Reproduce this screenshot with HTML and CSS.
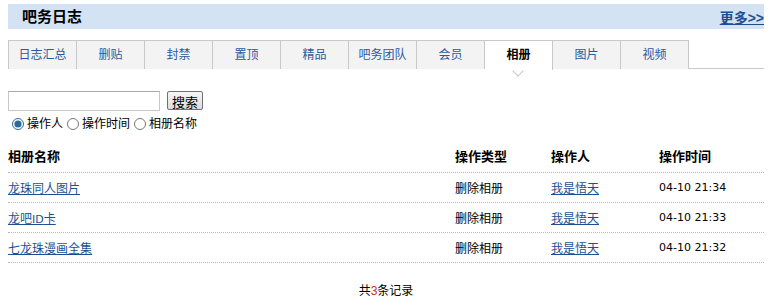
FILE: index.html
```html
<!DOCTYPE html>
<html lang="zh-CN">
<head>
  <meta charset="UTF-8" />
  <title>吧务日志</title>
  <link rel="stylesheet" href="styles.css">
</head>
<body>
  <div class="panel">
    <div class="panel-head">
      <h2>吧务日志</h2>
      <a class="more" href="#">更多&gt;&gt;</a>
    </div>

    <ul class="tabs">
      <li><a href="#">日志汇总</a></li>
      <li><a href="#">删贴</a></li>
      <li><a href="#">封禁</a></li>
      <li><a href="#">置顶</a></li>
      <li><a href="#">精品</a></li>
      <li><a href="#">吧务团队</a></li>
      <li><a href="#">会员</a></li>
      <li class="active"><a href="#">相册</a></li>
      <li><a href="#">图片</a></li>
      <li><a href="#">视频</a></li>
    </ul>

    <form class="search">
      <div class="search-row">
        <input type="text" class="search-input">
        <button type="button" class="search-btn">搜索</button>
      </div>
      <div class="radio-row">
        <label><input type="radio" name="by" checked>操作人</label>
        <label><input type="radio" name="by">操作时间</label>
        <label><input type="radio" name="by">相册名称</label>
      </div>
    </form>

    <div class="log-table">
      <div class="log-row log-head">
        <span>相册名称</span>
        <span>操作类型</span>
        <span>操作人</span>
        <span>操作时间</span>
      </div>
      <div class="log-row">
        <span><a href="#">龙珠同人图片</a></span>
        <span>删除相册</span>
        <span><a href="#">我是悟天</a></span>
        <span class="time">04-10 21:34</span>
      </div>
      <div class="log-row">
        <span><a href="#">龙吧<span class="latin">ID</span>卡</a></span>
        <span>删除相册</span>
        <span><a href="#">我是悟天</a></span>
        <span class="time">04-10 21:33</span>
      </div>
      <div class="log-row">
        <span><a href="#">七龙珠漫画全集</a></span>
        <span>删除相册</span>
        <span><a href="#">我是悟天</a></span>
        <span class="time">04-10 21:32</span>
      </div>
    </div>

    <div class="total">共<em>3</em>条记录</div>
  </div>
</body>
</html>
```

FILE: styles.css
```css
body {
  margin: 0;
  padding: 0;
  font-family: "Liberation Sans", "Noto Sans CJK SC", sans-serif;
  font-size: 12px;
  color: #000;
  background: #fff;
}

a {
  color: #1b4f91;
}

.panel {
  width: 756px;
  padding: 4px 0 0 8px;
}

.panel-head {
  display: flex;
  justify-content: space-between;
  align-items: center;
  height: 25px;
  background-color: #d3e3f3;
  padding-left: 14px;
}

.panel-head h2 {
  margin: 0;
  font-size: 15px;
  font-weight: bold;
  line-height: 25px;
}

.more {
  font-size: 14px;
  font-weight: bold;
  color: #1b4f91;
}

.tabs {
  list-style: none;
  margin: 11px 0 0;
  padding: 0;
  display: flex;
  border-bottom: 1px solid #c8c8c8;
  height: 28px;
}

.tabs li {
  position: relative;
  width: 67px;
  height: 28px;
  background-color: #f3f3f3;
  border-top: 1px solid #c8c8c8;
  border-right: 1px solid #c8c8c8;
  text-align: center;
}

.tabs li:first-child {
  border-left: 1px solid #c8c8c8;
}

.tabs li a {
  display: block;
  line-height: 28px;
  font-size: 12px;
  color: #2a5aa0;
  text-decoration: none;
}

.tabs li.active {
  background-color: #fff;
  height: 29px;
}

.tabs li.active a {
  color: #000;
  font-weight: bold;
}

/* little notch under the current tab */
.tabs li.active::after {
  content: "";
  position: absolute;
  left: 29px;
  top: 26px;
  width: 7px;
  height: 7px;
  background: #fff;
  border-right: 1px solid #c8c8c8;
  border-bottom: 1px solid #c8c8c8;
  transform: rotate(45deg);
}

.search {
  margin-top: 22px;
}

.search-row {
  display: flex;
  align-items: flex-start;
  gap: 7px;
}

.search-input {
  width: 148px;
  height: 16px;
  margin: 0;
  padding: 1px;
  border: 1px solid #c9c9c9;
  border-top-color: #a8a8a8;
}

.search-btn {
  margin: 0;
  width: 36px;
  height: 19px;
  padding: 0;
  font-family: inherit;
  font-size: 13px;
  border: 1px solid #707070;
  border-radius: 2px;
  background: linear-gradient(#f6f6f6, #dcdcdc);
}

.radio-row {
  display: flex;
  margin-top: 5px;
  font-size: 12px;
  line-height: 16px;
}

.radio-row label {
  display: flex;
  align-items: center;
}

.radio-row input {
  margin: 0 3px 0 4px;
  width: 12px;
  height: 12px;
  accent-color: #2c6a9a;
}

.log-table {
  margin-top: 16px;
}

.log-row {
  display: grid;
  grid-template-columns: 447px 96px 108px 1fr;
  align-items: center;
  height: 29px;
  border-bottom: 1px dotted #b8b8b8;
}

.log-row span {
  white-space: nowrap;
}

.log-head {
  height: 24px;
  align-items: start;
  line-height: 18px;
  font-weight: bold;
  font-size: 13px;
}

.latin {
  font-family: "DejaVu Sans", sans-serif;
  font-size: 11px;
}

.time {
  font-family: "DejaVu Sans", sans-serif;
  font-size: 11px;
}

.total {
  margin-top: 18px;
  text-align: center;
  font-size: 12px;
}

.total em {
  font-style: normal;
  color: #c03030;
}
```
